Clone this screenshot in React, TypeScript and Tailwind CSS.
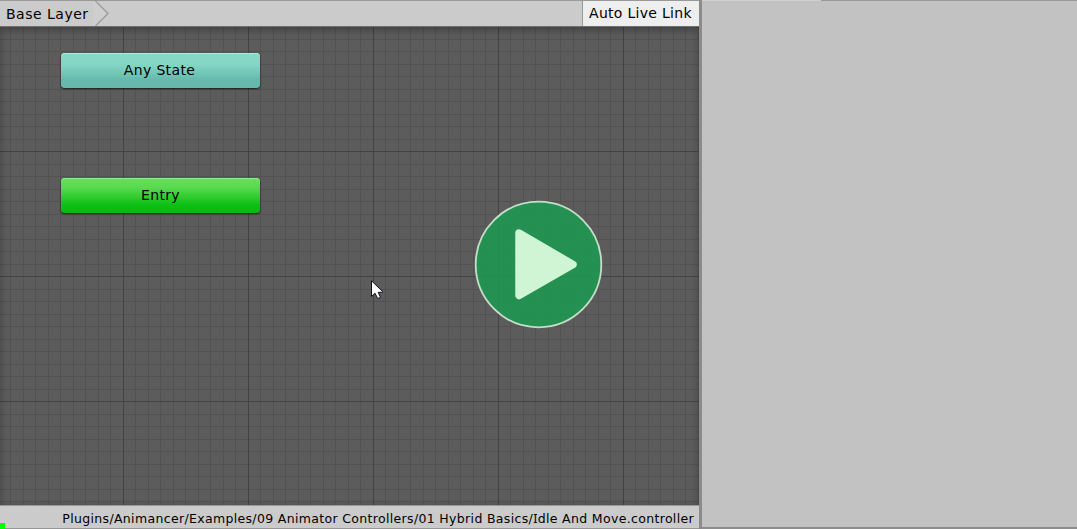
import React from "react";

function Toolbar() {
  return (
    <header className="flex h-[27px] shrink-0 border-t border-b border-t-[#999999] border-b-[#6f6f6f] bg-[#cbcbcb]">
      <div className="flex items-center pl-[6px] text-[14px] leading-none">
        <span className="w-[87px] whitespace-nowrap tracking-[0.5px]">Base Layer</span>
        <svg width="18" height="25" viewBox="0 0 18 25" fill="none">
          <path d="M0 -1h2L15 12.5L2 26H0Z" fill="#cecece" />
          <path d="M2 -.5L15 12.5L2 25.5" stroke="#999" strokeWidth="1.2" />
        </svg>
      </div>
      <button className="ml-auto flex w-[117px] items-center border-l border-[#999] bg-[#eeeeee] pb-[2px] pl-[6px] text-[14px] leading-none">
        <span className="whitespace-nowrap tracking-[0.3px]">Auto Live Link</span>
      </button>
    </header>
  );
}

function StateNode({ label, className }: { label: string; className: string }) {
  return (
    <div
      className={
        "absolute left-[61px] flex h-[35px] w-[199px] items-center justify-center rounded-[4px] pb-[2px] text-[14px] leading-none " +
        className
      }
    >
      {label}
    </div>
  );
}

function PlayBadge() {
  return (
    <svg className="absolute left-[474px] top-[173px]" width="130" height="130" viewBox="0 0 130 130">
      <circle cx="64.5" cy="64.5" r="62.8" fill="#1c9852" fillOpacity=".88" stroke="#c4dec8" strokeWidth="1.8" />
      <path d="M45 33L99 64.5L45 95.500Z" fill="#d0f5d5" stroke="#d0f5d5" strokeWidth="7.500" strokeLinejoin="round" />
    </svg>
  );
}

function Pointer() {
  return (
    <svg className="absolute left-[371px] top-[253px]" width="13" height="20" viewBox="0 0 13 20">
      <path
        d="M.5 .8V16.500L4 13.200L6.500 18.200H8.700L9.200 16.800L7.200 12.300H11.500V11.400Z"
        fill="#fff"
        stroke="#10101c"
        strokeWidth="1"
      />
    </svg>
  );
}

function Graph() {
  return (
    <main className="relative min-h-0 flex-1 overflow-hidden bg-[#5c5c5c]">
      <div className="absolute inset-0 bg-[repeating-linear-gradient(90deg,#525252_0_1px,transparent_1px_12px,#525252_12px_13px,transparent_13px_25px),repeating-linear-gradient(180deg,#525252_0_1px,transparent_1px_13px,#525252_13px_14px,transparent_14px_25px)] bg-[position:-2px_0,0_-1px] bg-[size:1000px_100%,100%_1000px]" />
      <div className="absolute inset-0 bg-[linear-gradient(90deg,#434343_1px,transparent_1px),linear-gradient(180deg,#434343_1px,transparent_1px)] bg-[position:-2px_0,0_-1px] bg-[size:125px_125px]" />
      <div className="absolute inset-0 shadow-[inset_0_3px_8px_0_rgba(0,0,0,0.3)]" />
      <StateNode
        label="Any State"
        className="top-[26px] pr-[2px] tracking-[0.35px] bg-[linear-gradient(#87dac8_0%,#82d5c3_35%,#67bbae_75%,#64b7a9)] shadow-[inset_0_1px_0_#a9ebd9,0_1px_2px_rgba(0,0,0,0.75)]"
      />
      <StateNode
        label="Entry"
        className="top-[151px] tracking-[0.35px] bg-[linear-gradient(#67df5e_0%,#59d951_28%,#0ec114_75%,#07b80d)] shadow-[inset_0_1px_0_#91ec88,0_1px_2px_rgba(0,0,0,0.75)]"
      />
      <PlayBadge />
      <Pointer />
    </main>
  );
}

function StatusBar() {
  return (
    <footer className="flex h-[24px] shrink-0 items-end justify-between border-t border-b border-t-[#989898] border-b-[#969696] bg-[#cbcbcb]">
      <span className="-mb-px h-[6px] w-[5px] bg-[#00ff00]" />
      <span className="mr-[5px] whitespace-nowrap pb-px text-[12.5px] leading-[16px] tracking-[0.335px]">
        Plugins/Animancer/Examples/09 Animator Controllers/01 Hybrid Basics/
        <span className="font-['Noto_Sans']">I</span>dle And Move.controller
      </span>
    </footer>
  );
}

export default function App() {
  return (
    <div className="flex h-[529px] w-[1077px] overflow-hidden bg-[#c2c2c2] font-['DejaVu_Sans',sans-serif] text-black">
      <section className="flex w-[699px] flex-col">
        <Toolbar />
        <Graph />
        <StatusBar />
      </section>
      <div className="w-[3px] bg-[#8b8b8b]" />
      <aside className="flex flex-1 flex-col bg-[#c2c2c2]">
        <div className="flex h-px">
          <span className="w-[119px] bg-[#cfcfcf]" />
          <span className="flex-1 bg-[#999]" />
        </div>
        <div className="mt-auto h-[2px] bg-[#8d8d8d]" />
      </aside>
    </div>
  );
}
